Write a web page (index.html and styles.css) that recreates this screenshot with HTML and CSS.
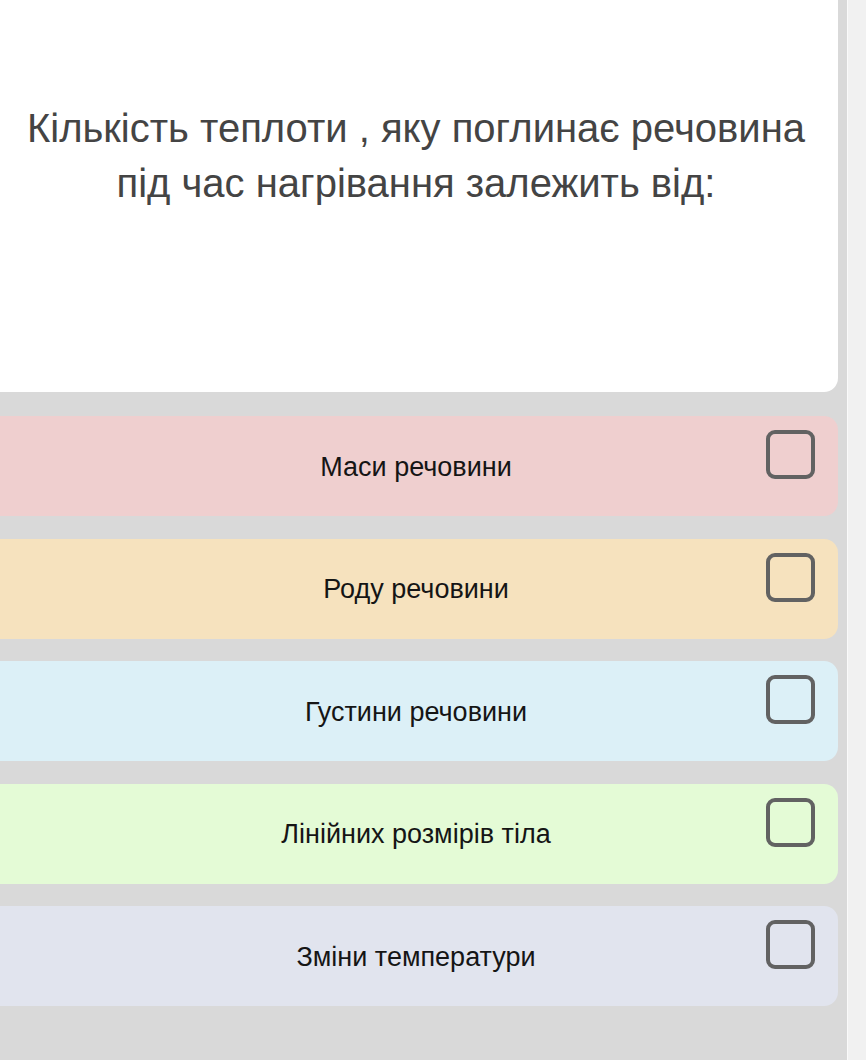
FILE: index.html
```html
<!DOCTYPE html>
<html lang="uk">
    <head>
        <meta charset="UTF-8">
        <meta name="viewport" content="width=device-width, initial-scale=1.0">
        <title>Тест</title>
        <link rel="stylesheet" href="styles.css">
    </head>
<body>
    <div class="page">
        <main class="quiz">
            <div class="question-card">
                <p class="question">Кількість теплоти , яку поглинає речовина під час нагрівання залежить від:</p>
            </div>

            <div class="options">
                <label class="option option-red">
                    <span class="option-text">Маси речовини</span>
                    <span class="check"></span>
                </label>
                <label class="option option-orange">
                    <span class="option-text">Роду речовини</span>
                    <span class="check"></span>
                </label>
                <label class="option option-blue">
                    <span class="option-text">Густини речовини</span>
                    <span class="check"></span>
                </label>
                <label class="option option-green">
                    <span class="option-text">Лінійних розмірів тіла</span>
                    <span class="check"></span>
                </label>
                <label class="option option-violet">
                    <span class="option-text">Зміни температури</span>
                    <span class="check"></span>
                </label>
            </div>
        </main>
        <div class="scrollbar"></div>
    </div>
</body>
</html>
```

FILE: styles.css
```css
body {
    margin: 0;
    background-color: #d9d9d9;
    font-family: "Liberation Sans", Arial, sans-serif;
}
.page {
    display: flex;
    justify-content: space-between;
    height: 1060px;
    overflow: hidden;
}
.quiz {
    width: 838px;
}
.question-card {
    background-color: #ffffff;
    height: 392px;
    border-radius: 0 0 14px 0;
    box-sizing: border-box;
    padding-top: 101px;
    padding-right: 6px;
}
.question {
    margin: 0 auto;
    width: 810px;
    text-align: center;
    font-size: 40px;
    line-height: 55px;
    color: #444444;
}
.options {
    display: flex;
    flex-direction: column;
    gap: 22.5px;
    padding-top: 24px;
}
.option {
    position: relative;
    display: flex;
    align-items: center;
    justify-content: center;
    height: 100px;
    padding-right: 6px;
    border-radius: 0 14px 14px 0;
}
.option-text {
    font-size: 27px;
    color: #151515;
    padding-top: 2px;
}
.check {
    position: absolute;
    top: 14px;
    right: 23px;
    width: 49px;
    height: 49px;
    box-sizing: border-box;
    border: 4px solid #626262;
    border-radius: 9px;
}
.option-red {
    background-color: #efcfcf;
}
.option-orange {
    background-color: #f6e2be;
}
.option-blue {
    background-color: #dcf0f7;
}
.option-green {
    background-color: #e4fbd6;
}
.option-violet {
    background-color: #e1e4ee;
}
.scrollbar {
    width: 18px;
    background-color: #f1f1f1;
    border-left: 1px solid #fafafa;
}
```
